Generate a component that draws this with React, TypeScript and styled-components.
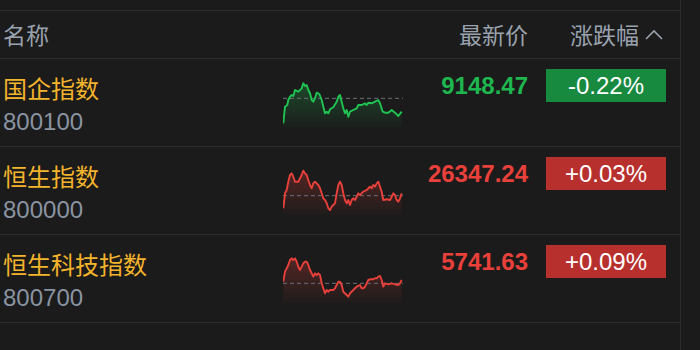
import * as React from 'react'
import styled, { createGlobalStyle } from 'styled-components'

interface IIndex {
	name: string
	code: string
	price: string
	change: string
	up: boolean
	// sparkline points, in zoomed coords (3x), with the y shift for this row
	points: number[][]
	shift: number
	base: number
}

const GlobalStyle = createGlobalStyle`
	html, body {
		margin: 0;
		padding: 0;
		background: #1b1b1b;
		font-family: "Liberation Sans", "Noto Sans CJK SC", sans-serif;
	}
`

const Page = styled.div`
	width: 700px;
	height: 350px;
	overflow: hidden;
	background: #1b1b1b;
`

const Table = styled.div`
	width: 681px;
	height: 350px;
	padding-top: 10px;
	box-sizing: border-box;
	border-right: 1px solid #2c2c2c;
`

const Grid = styled.div`
	display: grid;
	grid-template-columns: 280px 120px 125px 18px 120px 1fr;
	align-items: start;
	padding-left: 3px;
	border-top: 1px solid #2c2c2c;
	box-sizing: border-box;
`

const HeaderRow = styled(Grid)`
	height: 48px;
	align-items: center;
	color: #9aa2ae;
	font-size: 23px;
	font-family: "Noto Sans CJK SC", "Liberation Sans", sans-serif;
`

const HeadCell = styled.div<{ $right?: boolean }>`
	display: flex;
	align-items: center;
	justify-content: ${p => (p.$right ? 'flex-end' : 'flex-start')};
	gap: 6px;
	line-height: 1;
	padding-right: ${p => (p.$right ? '0' : '0')};
`

const SortCell = styled(HeadCell)`
	padding-right: 3px;
`

const Row = styled(Grid)`
	height: 88px;
	padding-top: 10px;
`

const NameCol = styled.div`
	display: flex;
	flex-direction: column;
	padding-top: 2px;
`

const Name = styled.div`
	color: #f4b42c;
	font-size: 24px;
	line-height: 34px;
	font-family: "Noto Sans CJK SC", "Liberation Sans", sans-serif;
`

const Code = styled.div`
	color: #8a93a1;
	font-size: 24px;
	line-height: 34px;
`

const Chart = styled.svg`
	display: block;
	margin-top: 8px;
`

const Price = styled.div<{ $up: boolean }>`
	color: ${p => (p.$up ? '#e8403a' : '#1eb64f')};
	font-size: 24px;
	font-weight: bold;
	line-height: 33px;
	text-align: right;
`

const Badge = styled.div<{ $up: boolean }>`
	height: 33px;
	background: ${p => (p.$up ? '#b8302d' : '#178a3f')};
	color: #fff;
	font-size: 24px;
	line-height: 33px;
	text-align: center;
`

const Bottom = styled.div`
	border-top: 1px solid #2c2c2c;
`

const data: IIndex[] = [
	{
		name: '国企指数',
		code: '800100',
		price: '9148.47',
		change: '-0.22%',
		up: false,
		shift: 7,
		base: 85,
		points: [
			[40, 160], [45, 110], [52, 105], [55, 90], [60, 80], [65, 75], [70, 78], [75, 60], [85, 65],
			[95, 55], [100, 40], [105, 48], [110, 45], [115, 60], [120, 70], [125, 90], [130, 95], [135, 85],
			[140, 68], [148, 72], [155, 90], [160, 110], [165, 130], [170, 125], [175, 130], [180, 118],
			[190, 112], [200, 95], [205, 80], [210, 75], [215, 95], [220, 115], [225, 130], [230, 120],
			[235, 140], [240, 125], [250, 120], [260, 115], [265, 105], [275, 105], [285, 100], [290, 105],
			[295, 98], [305, 100], [315, 95], [325, 90], [330, 100], [338, 125], [345, 128], [355, 128],
			[365, 120], [375, 128], [385, 138], [395, 125],
		],
	},
	{
		name: '恒生指数',
		code: '800000',
		price: '26347.24',
		change: '+0.03%',
		up: true,
		shift: 15,
		base: 137,
		points: [
			[40, 175], [45, 130], [50, 120], [55, 95], [60, 75], [65, 70], [70, 80], [75, 95], [85, 95],
			[95, 75], [100, 62], [105, 70], [110, 75], [115, 90], [120, 105], [125, 115], [130, 100],
			[135, 95], [140, 100], [145, 105], [150, 115], [155, 130], [160, 145], [165, 150], [170, 160],
			[175, 175], [180, 180], [185, 170], [190, 165], [195, 160], [200, 130], [205, 105], [210, 95],
			[215, 105], [220, 130], [225, 150], [230, 160], [235, 150], [240, 165], [245, 150], [250, 145],
			[255, 150], [260, 140], [265, 130], [270, 135], [280, 125], [290, 120], [295, 115], [300, 110],
			[305, 115], [310, 105], [315, 110], [320, 100], [325, 95], [330, 110], [335, 125], [340, 150],
			[350, 148], [360, 150], [365, 140], [370, 130], [375, 135], [380, 150], [385, 155], [390, 145],
			[395, 130],
		],
	},
	{
		name: '恒生科技指数',
		code: '800700',
		price: '5741.63',
		change: '+0.09%',
		up: true,
		shift: 13,
		base: 130,
		points: [
			[40, 125], [45, 95], [50, 85], [55, 75], [60, 60], [65, 55], [70, 60], [75, 55], [80, 65],
			[85, 80], [90, 90], [95, 80], [100, 70], [105, 65], [110, 65], [115, 75], [120, 90], [125, 100],
			[130, 110], [135, 100], [140, 105], [145, 100], [150, 105], [155, 130], [160, 145], [165, 160],
			[170, 150], [175, 155], [180, 150], [190, 150], [195, 145], [200, 135], [205, 125], [210, 125],
			[215, 135], [220, 155], [225, 160], [230, 165], [235, 170], [240, 160], [245, 155], [250, 150],
			[255, 145], [260, 140], [270, 135], [275, 145], [280, 145], [285, 140], [290, 130], [295, 120],
			[300, 118], [310, 118], [315, 115], [320, 115], [325, 110], [330, 108], [335, 120], [340, 140],
			[345, 130], [355, 133], [365, 130], [375, 133], [385, 135], [390, 130], [395, 120],
		],
	},
]

const Sparkline = (p: { item: IIndex; id: string }) => {
	const { item } = p
	const color = item.up ? '#e8403a' : '#1fc452'
	const pts = item.points.map(([x, y]) => [x / 3 - 13, y / 3 - item.shift])
	const line = pts.map(([x, y]) => `${x.toFixed(1)},${y.toFixed(1)}`).join(' ')
	const first = pts[0]
	const last = pts[pts.length - 1]
	const area = `${first[0].toFixed(1)},50 ${line} ${last[0].toFixed(1)},50`
	const base = item.base / 3 - item.shift

	return (
		<Chart width={120} height={50} viewBox="0 0 120 50">
			<defs>
				<linearGradient id={p.id} x1="0" y1="0" x2="0" y2="1">
					<stop offset="0%" stopColor={color} stopOpacity={0.28} />
					<stop offset="100%" stopColor={color} stopOpacity={0.02} />
				</linearGradient>
			</defs>
			<polygon points={area} fill={`url(#${p.id})`} />
			<line x1={0} y1={base} x2={120} y2={base} stroke="#6b6f76" strokeWidth={1} strokeDasharray="4 3" />
			<polyline points={line} fill="none" stroke={color} strokeWidth={1.9} strokeLinejoin="round" />
		</Chart>
	)
}

export default function App() {
	return (
		<Page>
			<GlobalStyle />
			<Table>
				<HeaderRow>
					<HeadCell>名称</HeadCell>
					<div />
					<HeadCell $right>最新价</HeadCell>
					<div />
					<SortCell $right>
						涨跌幅
						<svg width="18" height="12" viewBox="0 0 18 12">
							<polyline points="1,10 9,2 17,10" fill="none" stroke="#9aa2ae" strokeWidth={1.6} />
						</svg>
					</SortCell>
				</HeaderRow>
				{data.map((item, i) => (
					<Row key={item.code}>
						<NameCol>
							<Name>{item.name}</Name>
							<Code>{item.code}</Code>
						</NameCol>
						<Sparkline item={item} id={`spark${i}`} />
						<Price $up={item.up}>{item.price}</Price>
						<div />
						<Badge $up={item.up}>{item.change}</Badge>
					</Row>
				))}
				<Bottom />
			</Table>
		</Page>
	)
}
